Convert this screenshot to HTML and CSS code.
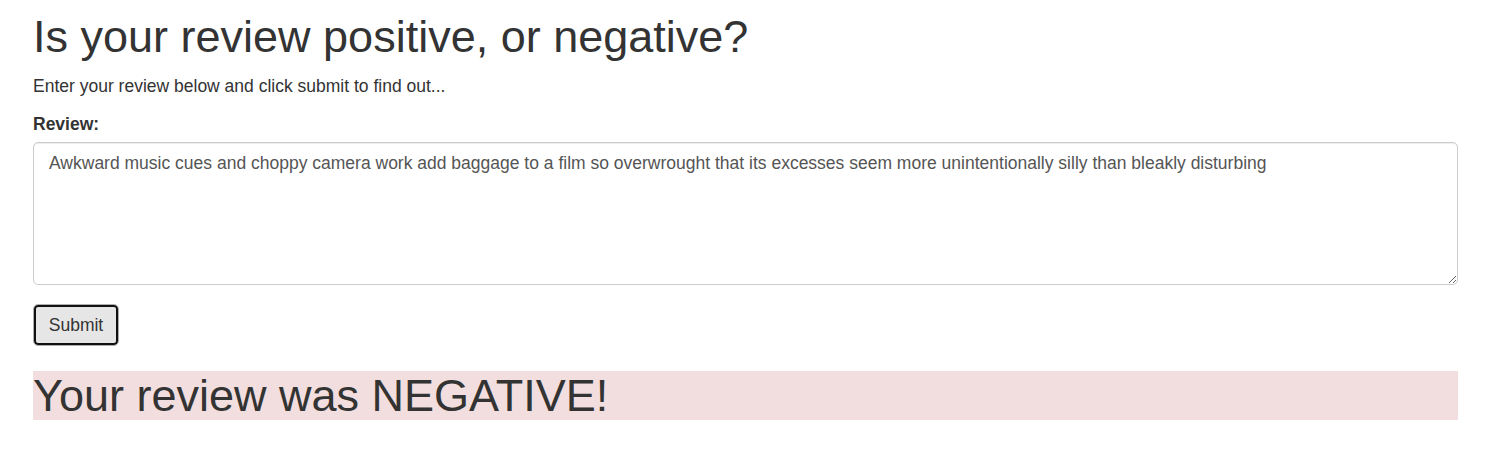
FILE: index.html
```html
<!DOCTYPE html>
<html lang="en">
<head>
<meta charset="utf-8">
<title>Review sentiment</title>
<link rel="stylesheet" href="styles.css">
</head>
<body>
<div class="container">
  <h1 class="title">Is your review positive, or negative?</h1>
  <p class="intro">Enter your review below and click submit to find out...</p>
  <form class="review-form">
    <label class="label" for="review">Review:</label>
    <textarea id="review" class="review-box">Awkward music cues and choppy camera work add baggage to a film so overwrought that its excesses seem more unintentionally silly than bleakly disturbing</textarea>
    <button type="button" class="btn">Submit</button>
  </form>
  <div class="result">Your review was NEGATIVE!</div>
</div>
</body>
</html>
```

FILE: styles.css
```css
html, body {
  margin: 0;
  padding: 0;
  background: #fff;
}
body {
  font-family: "Liberation Sans", Arial, Helvetica, sans-serif;
  font-size: 17.5px;
  line-height: 25px;
  color: #333;
}
.container {
  width: 1425px;
  padding-left: 33px;
}
.title {
  font-size: 45px;
  font-weight: 400;
  line-height: 49.5px;
  margin: 12px 0 12.5px;
}
.intro {
  margin: 0 0 12.5px;
}
.review-form {
  display: flex;
  flex-direction: column;
  align-items: flex-start;
}
.label {
  font-weight: 700;
  margin-bottom: 5.5px;
}
.review-box {
  box-sizing: border-box;
  width: 1425px;
  height: 143px;
  margin: 0;
  padding: 7.5px 15px;
  border: 1px solid #ccc;
  border-radius: 5px;
  font-family: inherit;
  font-size: 17.5px;
  line-height: 25px;
  color: #555;
  resize: vertical;
  box-shadow: inset 0 1px 1px rgba(0,0,0,.075);
}
.btn {
  margin-top: 19px;
  box-sizing: border-box;
  width: 86px;
  height: 42px;
  border: 1px solid #adadad;
  border-radius: 5px;
  background: #e6e6e6;
  box-shadow: inset 0 0 0 2px #111;
  font-family: inherit;
  font-size: 17.5px;
  color: #333;
  padding: 0;
}
.result {
  margin-top: 25px;
  background: #f2dede;
  font-size: 45px;
  line-height: 49px;
  height: 49px;
}
```
